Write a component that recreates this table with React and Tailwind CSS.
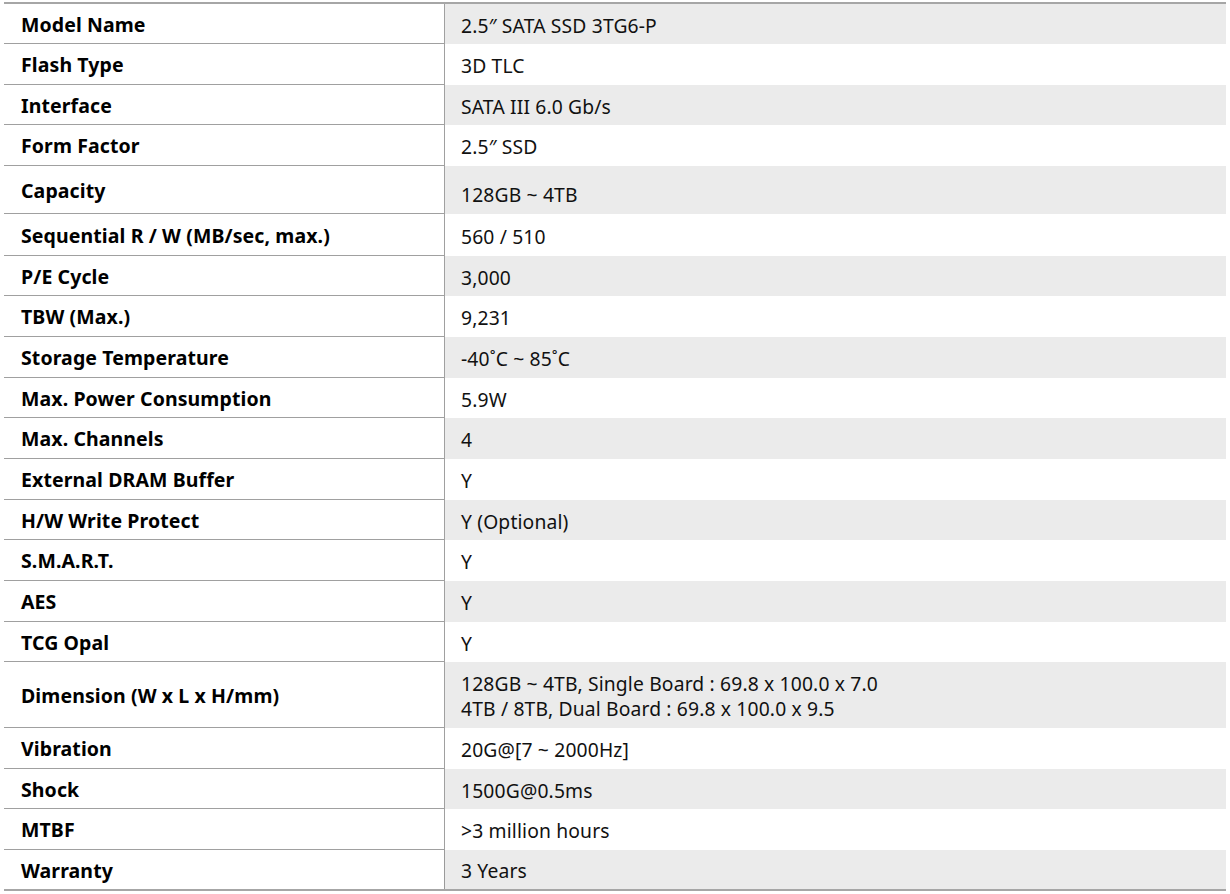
const specs = [
  { label: 'Model Name', value: ['2.5″ SATA SSD 3TG6-P'], h: 'h-[40px]' },
  { label: 'Flash Type', value: ['3D TLC'], h: 'h-[41px]' },
  { label: 'Interface', value: ['SATA III 6.0 Gb/s'], h: 'h-[40px]' },
  { label: 'Form Factor', value: ['2.5″ SSD'], h: 'h-[41px]' },
  { label: 'Capacity', value: ['128GB ~ 4TB'], h: 'h-[48px]', low: true },
  { label: 'Sequential R / W (MB/sec, max.)', value: ['560 / 510'], h: 'h-[42px]' },
  { label: 'P/E Cycle', value: ['3,000'], h: 'h-[40px]' },
  { label: 'TBW (Max.)', value: ['9,231'], h: 'h-[41px]' },
  { label: 'Storage Temperature', value: ['-40˚C ~ 85˚C'], h: 'h-[41px]' },
  { label: 'Max. Power Consumption', value: ['5.9W'], h: 'h-[40px]' },
  { label: 'Max. Channels', value: ['4'], h: 'h-[41px]' },
  { label: 'External DRAM Buffer', value: ['Y'], h: 'h-[41px]' },
  { label: 'H/W Write Protect', value: ['Y (Optional)'], h: 'h-[40px]' },
  { label: 'S.M.A.R.T.', value: ['Y'], h: 'h-[41px]' },
  { label: 'AES', value: ['Y'], h: 'h-[41px]' },
  { label: 'TCG Opal', value: ['Y'], h: 'h-[40px]' },
  {
    label: 'Dimension (W x L x H/mm)',
    value: ['128GB ~ 4TB, Single Board : 69.8 x 100.0 x 7.0', '4TB / 8TB, Dual Board : 69.8 x 100.0 x 9.5'],
    h: 'h-[66px]',
  },
  { label: 'Vibration', value: ['20G@[7 ~ 2000Hz]'], h: 'h-[41px]' },
  { label: 'Shock', value: ['1500G@0.5ms'], h: 'h-[40px]' },
  { label: 'MTBF', value: ['>3 million hours'], h: 'h-[41px]' },
  { label: 'Warranty', value: ['3 Years'], h: 'h-[39px]' },
];

function SpecRow({ spec, shaded, last }) {
  return (
    <div className={`flex ${spec.h}`}>
      <div
        className={`w-[441px] shrink-0 flex items-center pl-[17px] pt-[2px] border-r border-[#9a9a9a] ${
          last ? '' : 'border-b border-[#a0a0a0]'
        }`}
      >
        <span className="text-[19.5px] font-bold text-black tracking-[0.1px]">{spec.label}</span>
      </div>
      <div
        className={`flex-1 flex flex-col justify-center pl-[16px] ${shaded ? 'bg-[#ebebeb]' : 'bg-white'} ${
          spec.low ? 'pt-[9px]' : 'pt-[2px]'
        }`}
      >
        {spec.value.map((line) => (
          <div key={line} className="text-[19.3px] leading-[25px] tracking-[0.15px] text-[#111]">
            {line}
          </div>
        ))}
      </div>
    </div>
  );
}

export default function App() {
  return (
    <div className="w-[1230px] h-[894px] bg-white pt-[2px] pl-[4px]" style={{ fontFamily: '"Noto Sans", "Open Sans", sans-serif' }}>
      <div className="w-[1222px] border-t-2 border-b-2 border-[#a6a6a6]">
        {specs.map((spec, i) => (
          <SpecRow key={spec.label} spec={spec} shaded={i % 2 === 0} last={i === specs.length - 1} />
        ))}
      </div>
    </div>
  );
}
